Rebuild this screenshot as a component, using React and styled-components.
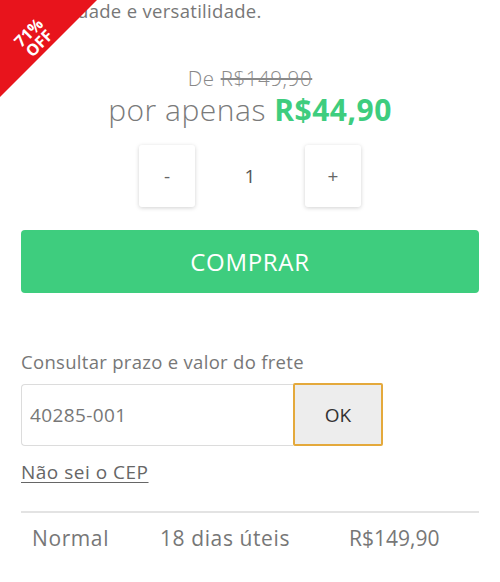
import React from 'react';
import styled, { createGlobalStyle } from 'styled-components';

const Global = createGlobalStyle`
  body {
    margin: 0;
    background: #fff;
    font-family: "Open Sans", "Liberation Sans", sans-serif;
    overflow: hidden;
  }
`;

const Page = styled.div`
  position: relative;
  width: 500px;
  height: 582px;
  padding: 0 21px;
  box-sizing: border-box;
  overflow: hidden;
`;

const Badge = styled.div`
  position: absolute;
  top: 0;
  left: 0;
  width: 97px;
  height: 97px;
  background: #e8141c;
  clip-path: polygon(0 0, 100% 0, 0 100%);
`;

const BadgeText = styled.div`
  position: absolute;
  top: 23px;
  left: 4px;
  width: 60px;
  transform: rotate(-45deg);
  color: #fff;
  font-weight: 700;
  font-size: 16px;
  line-height: 15px;
  text-align: center;
`;

const Intro = styled.p`
  margin: -2px 0 0;
  font-size: 18.5px;
  letter-spacing: 0.3px;
  line-height: 26px;
  color: #777;
`;

const Prices = styled.div`
  margin-top: 40px;
  text-align: center;
  color: #888;
  font-weight: 300;
`;

const OldPrice = styled.div`
  font-size: 20.5px;
  letter-spacing: 0.6px;
  line-height: 28px;

  s {
    color: #8a8a8a;
  }
`;

const NewPrice = styled.div`
  font-size: 30px;
  letter-spacing: 0.5px;
  line-height: 36px;
  color: #7a7a7a;

  strong {
    color: #3ecd7e;
    font-weight: 700;
  }
`;

const Quantity = styled.div`
  display: flex;
  justify-content: center;
  align-items: center;
  margin-top: 17px;
`;

const QtyButton = styled.button`
  width: 56px;
  height: 62px;
  border: none;
  border-radius: 3px;
  background: #fff;
  box-shadow: 0 1px 4px rgba(0, 0, 0, 0.18);
  font-family: inherit;
  font-size: 19px;
  color: #666;
  cursor: pointer;
`;

const QtyValue = styled.span`
  width: 110px;
  text-align: center;
  font-size: 19px;
  color: #555;
`;

const BuyButton = styled.button`
  display: block;
  width: 100%;
  height: 63px;
  margin-top: 23px;
  border: none;
  border-radius: 4px;
  background: #3ecd7e;
  color: #fff;
  font-family: inherit;
  font-size: 24px;
  letter-spacing: 0.7px;
  cursor: pointer;
`;

const Label = styled.div`
  margin-top: 57px;
  font-size: 18.5px;
  letter-spacing: 0.3px;
  line-height: 24px;
  color: #777;
`;

const CepRow = styled.form`
  display: flex;
  margin-top: 10px;
`;

const CepInput = styled.input`
  width: 272px;
  height: 62px;
  box-sizing: border-box;
  padding: 0 8px;
  border: 1px solid #dcdcdc;
  border-right: none;
  border-radius: 4px 0 0 4px;
  font-family: inherit;
  font-size: 19px;
  letter-spacing: 0.4px;
  color: #777;
  outline: none;
`;

const OkButton = styled.button`
  width: 90px;
  height: 63px;
  margin-top: -1px;
  box-sizing: border-box;
  border: 2px solid #e4a93c;
  border-radius: 2px;
  background: #ededed;
  font-family: inherit;
  font-size: 19px;
  color: #333;
  cursor: pointer;
`;

const CepLink = styled.a`
  display: inline-block;
  margin-top: 14px;
  font-size: 19px;
  letter-spacing: 0.5px;
  line-height: 24px;
  color: #666;
  text-decoration: underline;
  text-underline-offset: 3px;
`;

const Divider = styled.hr`
  margin: 27px 0 0;
  border: none;
  border-top: 2px solid #e3e3e3;
`;

const ShipRow = styled.div`
  display: grid;
  grid-template-columns: 128px 189px auto;
  padding: 11px 0 0 11px;
  font-size: 21px;
  letter-spacing: 0.6px;
  line-height: 28px;
  color: #777;

  span:last-child {
    letter-spacing: 0;
  }
`;

export default function App() {
  const [qty, setQty] = React.useState(1);
  const [cep, setCep] = React.useState('40285-001');

  return (
    <Page>
      <Global />
      <Badge>
        <BadgeText>71%<br />OFF</BadgeText>
      </Badge>
      <Intro>praticidade e versatilidade.</Intro>

      <Prices>
        <OldPrice>De <s>R$149,90</s></OldPrice>
        <NewPrice>por apenas <strong>R$44,90</strong></NewPrice>
      </Prices>

      <Quantity>
        <QtyButton onClick={() => setQty(qty > 1 ? qty - 1 : 1)}>-</QtyButton>
        <QtyValue>{qty}</QtyValue>
        <QtyButton onClick={() => setQty(qty + 1)}>+</QtyButton>
      </Quantity>

      <BuyButton>COMPRAR</BuyButton>

      <Label>Consultar prazo e valor do frete</Label>
      <CepRow onSubmit={(e) => e.preventDefault()}>
        <CepInput value={cep} onChange={(e) => setCep(e.target.value)} />
        <OkButton>OK</OkButton>
      </CepRow>
      <CepLink href="#">Não sei o CEP</CepLink>

      <Divider />
      <ShipRow>
        <span>Normal</span>
        <span>18 dias úteis</span>
        <span>R$149,90</span>
      </ShipRow>
    </Page>
  );
}
